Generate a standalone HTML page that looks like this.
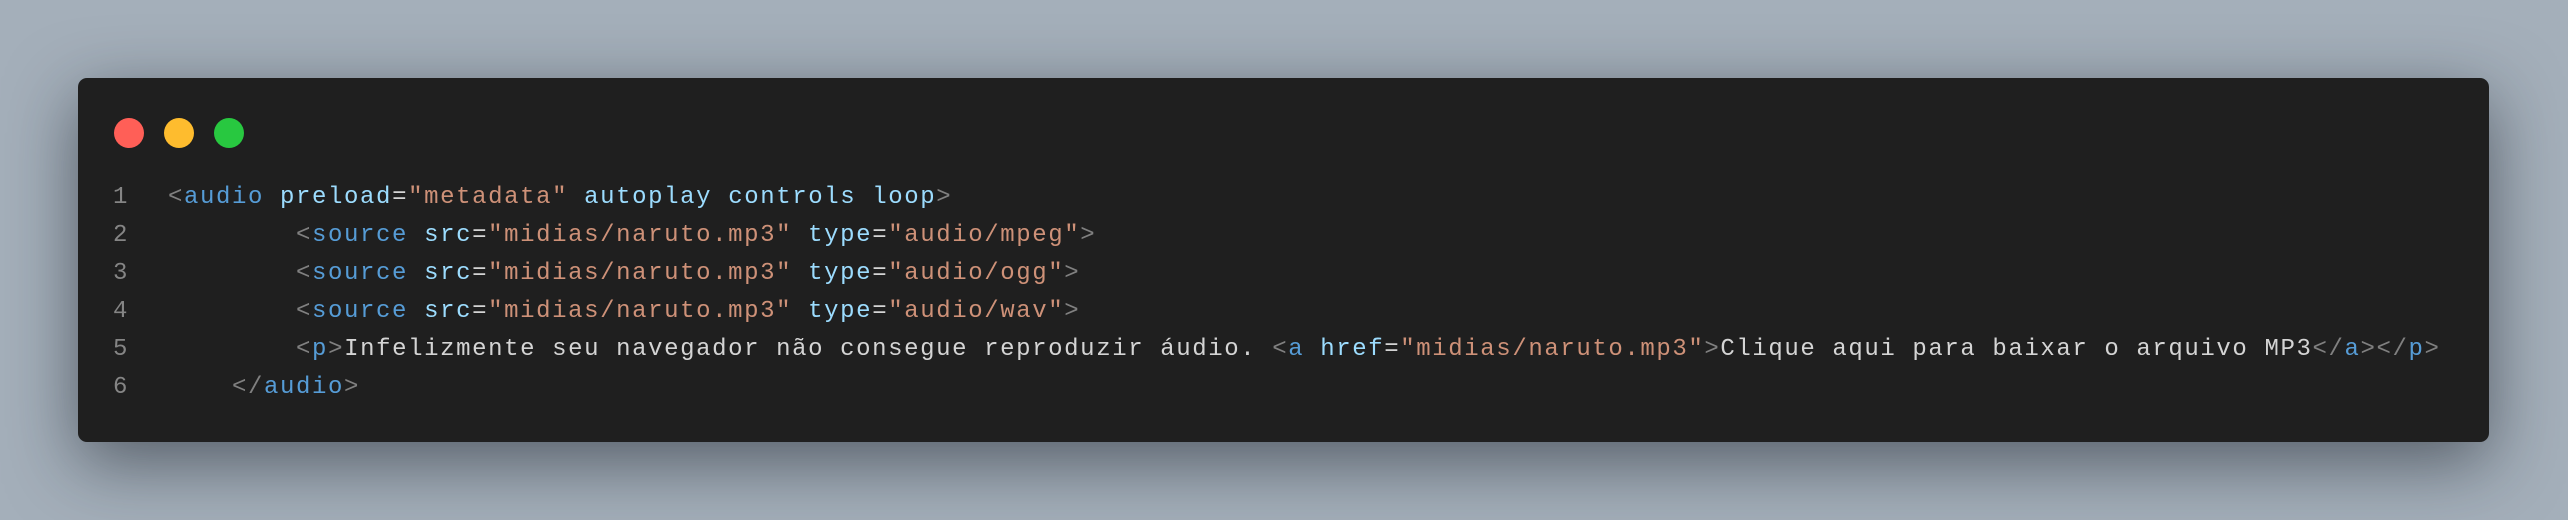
<!DOCTYPE html>
<html><head><meta charset="utf-8"><style>
html,body{margin:0;padding:0;}
body{width:2568px;height:520px;background:#a4afba;position:relative;overflow:hidden;}
.win{position:absolute;left:78px;top:78px;width:2411px;height:364px;background:#1f1f1f;border-radius:9px;box-shadow:0 20px 70px rgba(20,25,35,0.55);}
.dot{position:absolute;top:118px;width:30px;height:30px;border-radius:50%;}
.code{position:absolute;left:0;top:179px;width:2568px;font-family:"Liberation Mono",monospace;font-size:24px;letter-spacing:1.6px;line-height:38px;color:#d4d4d4;}
.row{position:relative;height:38px;}
.ln{position:absolute;left:113px;top:0;color:#858585;}
.c{position:absolute;left:168px;top:0;white-space:pre;}
.b{color:#808080}.t{color:#569cd6}.a{color:#9cdcfe}.s{color:#ce9178}
</style></head><body>
<div class="win"></div>
<div class="dot" style="left:114px;background:#ff5f57"></div>
<div class="dot" style="left:164px;background:#febc2e"></div>
<div class="dot" style="left:214px;background:#28c840"></div>
<div class="code"><div class="row"><span class="ln">1</span><span class="c"><span class="b">&lt;</span><span class="t">audio</span> <span class="a">preload</span>=<span class="s">"metadata"</span> <span class="a">autoplay</span> <span class="a">controls</span> <span class="a">loop</span><span class="b">&gt;</span></span></div><div class="row"><span class="ln">2</span><span class="c">        <span class="b">&lt;</span><span class="t">source</span> <span class="a">src</span>=<span class="s">"midias/naruto.mp3"</span> <span class="a">type</span>=<span class="s">"audio/mpeg"</span><span class="b">&gt;</span></span></div><div class="row"><span class="ln">3</span><span class="c">        <span class="b">&lt;</span><span class="t">source</span> <span class="a">src</span>=<span class="s">"midias/naruto.mp3"</span> <span class="a">type</span>=<span class="s">"audio/ogg"</span><span class="b">&gt;</span></span></div><div class="row"><span class="ln">4</span><span class="c">        <span class="b">&lt;</span><span class="t">source</span> <span class="a">src</span>=<span class="s">"midias/naruto.mp3"</span> <span class="a">type</span>=<span class="s">"audio/wav"</span><span class="b">&gt;</span></span></div><div class="row"><span class="ln">5</span><span class="c">        <span class="b">&lt;</span><span class="t">p</span><span class="b">&gt;</span>Infelizmente seu navegador não consegue reproduzir áudio. <span class="b">&lt;</span><span class="t">a</span> <span class="a">href</span>=<span class="s">"midias/naruto.mp3"</span><span class="b">&gt;</span>Clique aqui para baixar o arquivo MP3<span class="b">&lt;/</span><span class="t">a</span><span class="b">&gt;&lt;/</span><span class="t">p</span><span class="b">&gt;</span></span></div><div class="row"><span class="ln">6</span><span class="c">    <span class="b">&lt;/</span><span class="t">audio</span><span class="b">&gt;</span></span></div></div>
</body></html>
